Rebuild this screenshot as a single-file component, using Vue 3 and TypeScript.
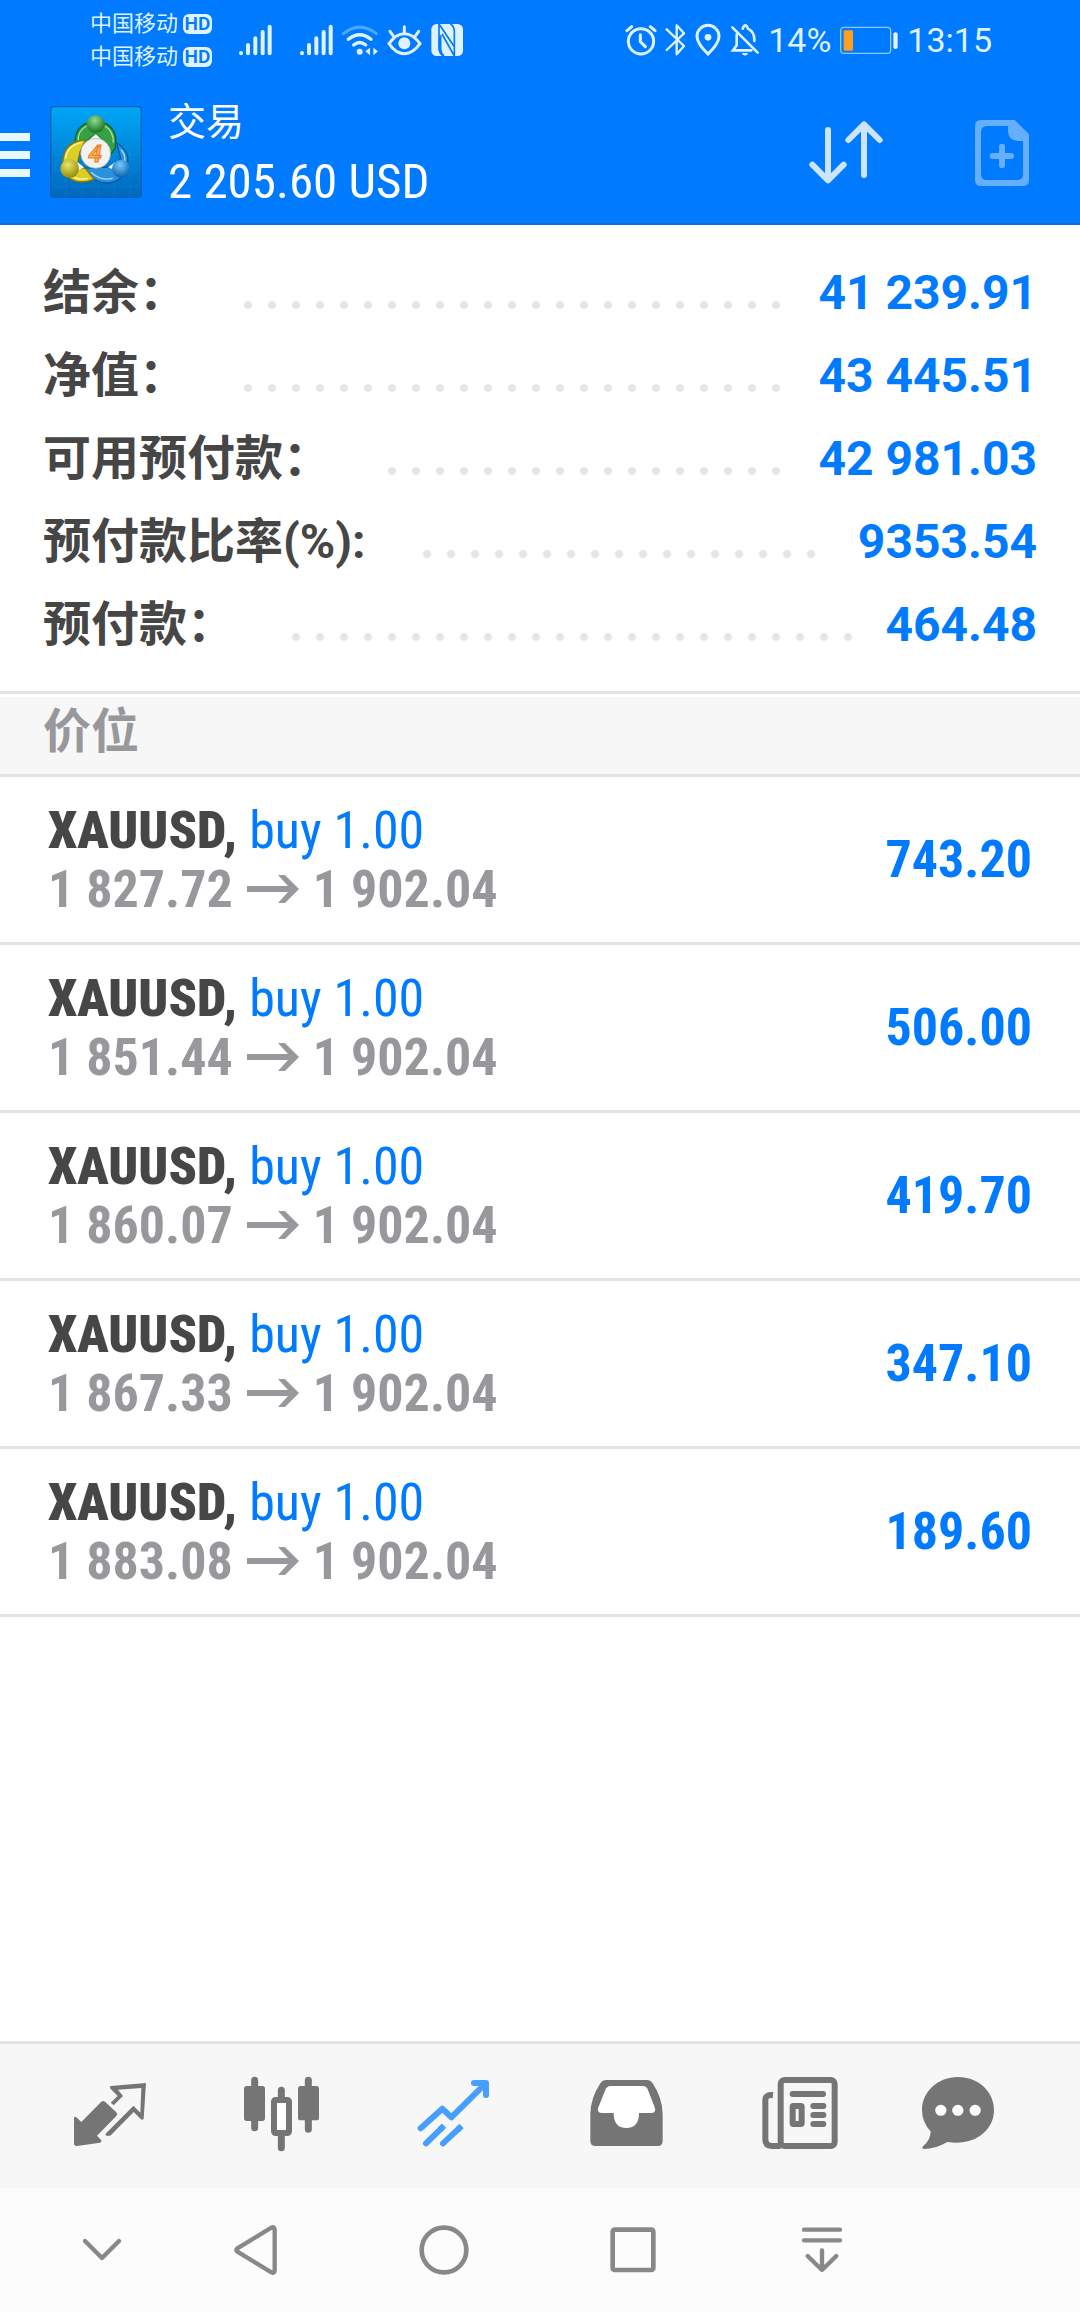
<script setup lang="ts">
interface SummaryRow {
  label: string
  value: string
}

interface Position {
  symbol: string
  side: string
  open: string
  current: string
  profit: string
}

const carriers: string[] = ['中国移动', '中国移动']

const summary: SummaryRow[] = [
  { label: '结余：', value: '41 239.91' },
  { label: '净值：', value: '43 445.51' },
  { label: '可用预付款：', value: '42 981.03' },
  { label: '预付款比率(%):', value: '9353.54' },
  { label: '预付款：', value: '464.48' },
]

const positions: Position[] = [
  { symbol: 'XAUUSD,', side: 'buy 1.00', open: '1 827.72', current: '1 902.04', profit: '743.20' },
  { symbol: 'XAUUSD,', side: 'buy 1.00', open: '1 851.44', current: '1 902.04', profit: '506.00' },
  { symbol: 'XAUUSD,', side: 'buy 1.00', open: '1 860.07', current: '1 902.04', profit: '419.70' },
  { symbol: 'XAUUSD,', side: 'buy 1.00', open: '1 867.33', current: '1 902.04', profit: '347.10' },
  { symbol: 'XAUUSD,', side: 'buy 1.00', open: '1 883.08', current: '1 902.04', profit: '189.60' },
]
</script>

<template>
  <div class="page">
    <div class="status">
      <div class="carriers">
        <div v-for="(name, i) in carriers" :key="i" class="carrier">
          <span>{{ name }}</span><span class="hd">HD</span>
        </div>
      </div>
      <svg v-for="n in 2" :key="n" class="signal" width="36" height="36" viewBox="474 66 108 108" fill="none" stroke="#dff2ff" stroke-width="12" stroke-linecap="round">
        <path d="M486 159v1M507 135v25M529 115v45M551 96v64M572 80v80" />
      </svg>
      <div class="status-group">
        <svg width="38" height="36" viewBox="786 66 114 108" fill="none" stroke="#dff2ff" stroke-linecap="round">
          <path d="M793 101Q842 62 892 101" stroke="#4da6ff" stroke-width="9" />
          <path d="M808 118Q842 90 876 118M824 135Q842 120 860 135" stroke-width="10" />
          <circle cx="842" cy="155" r="9" fill="#dff2ff" stroke="none" />
          <path d="M873 143v23l-14-12zM883 143v23l14-12z" fill="#dff2ff" stroke="none" />
        </svg>
        <svg width="36" height="36" viewBox="921 66 108 108" fill="none" stroke="#dff2ff" stroke-width="9" stroke-linecap="round">
          <path d="M930 131Q950 101 976 101T1023 131Q1002 161 976 161T930 131Z" />
          <path d="M976 80v18M933 94l10 14M1019 94l-10 14" />
          <circle cx="976" cy="130" r="18" fill="#dff2ff" stroke="none" />
        </svg>
        <svg width="36" height="36" viewBox="1053 66 108 108">
          <rect x="1060" y="72" width="95" height="96" rx="16" fill="#dff2ff" />
          <path d="M1083 72v74q1 16 15 22M1083 72l46 68V93q-1-15-12-21M1088 106v43q2 14 10 19M1092 102l37 66V93" fill="none" stroke="#007aff" stroke-width="5" />
        </svg>
      </div>
      <div class="status-right">
        <svg width="32" height="36" viewBox="66 66 96 108" fill="none" stroke="#dff2ff" stroke-width="9" stroke-linecap="round">
          <circle cx="114" cy="124" r="38" />
          <path d="M112 104v21l15 15M72 92l14-12M156 92l-14-12" />
        </svg>
        <svg width="21" height="36" viewBox="192 66 63 108" fill="none" stroke="#dff2ff" stroke-width="7" stroke-linejoin="round" stroke-linecap="round">
          <path d="M197 88l52 50-22 25V76l22 24-52 50" />
        </svg>
        <svg width="28" height="36" viewBox="282 66 84 108" fill="none" stroke="#dff2ff" stroke-width="9">
          <path d="M324 162Q291 131 291 109A33 33 0 0 1 357 109Q357 131 324 162Z" />
          <circle cx="324" cy="112" r="10" fill="#dff2ff" stroke="none" />
        </svg>
        <svg width="30" height="36" viewBox="396 66 90 108" fill="none" stroke="#dff2ff" stroke-width="8" stroke-linecap="round">
          <path d="M403 82l76 76M416 104v32l-11 15h55M434 86q4-10 8-10t8 10q19 10 19 32v5" />
          <path d="M433 161h16l-8 4z" stroke-width="4" />
        </svg>
        <span class="status-text">14%</span>
        <svg width="60" height="36" viewBox="717 66 180 108">
          <rect x="722" y="82" width="150" height="78" rx="10" fill="none" stroke="#8cc8ff" stroke-width="4" />
          <rect x="731" y="91" width="28" height="61" rx="3" fill="#ff9d1c" />
          <rect x="880" y="97" width="13" height="50" rx="6" fill="#dff2ff" />
        </svg>
        <span class="status-text">13:15</span>
      </div>
    </div>

    <header class="header">
      <button class="plain" type="button" aria-label="菜单">
        <svg width="30" height="50" viewBox="0 0 30 50" fill="#e9f7ff">
          <path d="M0 6h30v8H0zM0 24h30v8H0zM0 42h30v8H0z" />
        </svg>
      </button>
      <svg class="logo" width="92" height="92" viewBox="150 80 276 276">
        <defs>
          <linearGradient id="tile" x1="0" y1="0" x2="0" y2="1"><stop offset="0" stop-color="#00a6f8" /><stop offset="1" stop-color="#0068bd" /></linearGradient>
          <radialGradient id="green" cx=".45" cy=".3" r=".7"><stop offset="0" stop-color="#8fdc94" /><stop offset="1" stop-color="#15701f" /></radialGradient>
          <radialGradient id="gold" cx=".4" cy=".3" r=".7"><stop offset="0" stop-color="#e9e56c" /><stop offset="1" stop-color="#948d08" /></radialGradient>
          <radialGradient id="sky" cx=".45" cy=".3" r=".7"><stop offset="0" stop-color="#79c9f8" /><stop offset="1" stop-color="#0762ae" /></radialGradient>
        </defs>
        <rect x="152" y="82" width="272" height="272" rx="10" fill="url(#tile)" stroke="#0760b4" stroke-width="4" />
        <path d="M154 130h268M154 178h268M154 226h268M154 274h268M154 322h268M198 84v268M246 84v268M294 84v268M342 84v268M390 84v268" stroke="#36abf0" stroke-opacity=".2" stroke-width="2" />
        <path d="M229 206Q216 157 256 133H318Q356 155 345 208L322 238L306 181L286 164L262 184L246 215Z" fill="#35a044" stroke="#156329" stroke-width="4" />
        <path d="M235 188Q231 155 260 140M340 190Q341 157 315 140" fill="none" stroke="#a3e6a4" stroke-width="4" />
        <path d="M350 191Q393 218 381 260Q370 306 326 311Q275 311 254 266L302 264L340 264L362 238Z" fill="#2b91dc" stroke="#075aa3" stroke-width="4" />
        <path d="M273 279Q302 306 338 297M363 211Q380 231 372 250" fill="none" stroke="#a8dcff" stroke-width="4" />
        <path d="M257 182Q190 185 188 252L205 294Q234 318 282 300L256 267L230 263L240 218Z" fill="#dbcf27" stroke="#807708" stroke-width="4" />
        <path d="M197 237Q201 199 244 190M222 294Q242 303 263 297" fill="none" stroke="#faf8b2" stroke-width="4" />
        <path d="M267 181l20-17 19 17zM232 248l20 16-20 10zM324 264l22-16v25z" fill="#f3fbf3" />
        <circle cx="287" cy="134" r="27" fill="url(#green)" />
        <circle cx="209" cy="268" r="28" fill="url(#gold)" />
        <circle cx="363" cy="268" r="27" fill="url(#sky)" />
        <circle cx="287" cy="222" r="45" fill="#f3f2f3" stroke="#a5a5a5" stroke-width="2" />
        <text x="285" y="247" text-anchor="middle" font-family="Roboto, sans-serif" font-size="74" font-weight="700" font-style="italic" fill="#ffb15f" stroke="#e78122" stroke-width="3">4</text>
      </svg>
      <div class="account">
        <h1 class="title">交易</h1>
        <div class="balance">2 205.60 USD</div>
      </div>
      <button class="plain" type="button" aria-label="排序">
        <svg width="80" height="76" viewBox="78 72 240 228" fill="none" stroke="#cce4ff" stroke-width="18" stroke-linecap="round" stroke-linejoin="round">
          <path d="M144 120v150M97 224l47 47 47-47M252 255V105M205 150l47-47 47 47" />
        </svg>
      </button>
      <button class="plain" type="button" aria-label="新订单">
        <svg width="60" height="76" viewBox="576 72 180 228">
          <path fill="#66afff" fill-rule="evenodd" d="M603 90H704L747 133V270Q747 288 729 288H603Q585 288 585 270V108Q585 90 603 90ZM621 108Q603 108 603 126V252Q603 270 621 270H711Q729 270 729 252V153H714Q684 151 684 122V108Z" />
          <path d="M638 198h55M666 170v56" stroke="#66afff" stroke-width="18" stroke-linecap="round" />
        </svg>
      </button>
    </header>

    <main class="content">
      <dl class="summary">
        <div v-for="row in summary" :key="row.label" class="summary-row">
          <dt>{{ row.label }}</dt>
          <span class="leader" aria-hidden="true"></span>
          <dd>{{ row.value }}</dd>
        </div>
      </dl>

      <h2 class="section">价位</h2>
      <ul class="positions">
        <li v-for="(p, i) in positions" :key="i" class="position">
          <div>
            <div class="line"><b class="symbol">{{ p.symbol }}</b><span class="side">{{ p.side }}</span></div>
            <div class="line prices">
              <span>{{ p.open }}</span>
              <svg width="52" height="28" viewBox="0 0 52 28" fill="#98989c">
                <path d="M0 11H41L31 0H38L52 14L38 28H31L41 17H0Z" />
              </svg>
              <span>{{ p.current }}</span>
            </div>
          </div>
          <div class="profit">{{ p.profit }}</div>
        </li>
      </ul>
    </main>

    <nav class="tabs">
      <button class="plain" type="button" aria-label="行情">
        <svg width="80" height="80" viewBox="90 138 240 240" fill="#757575">
          <path d="M102 263Q104 258 109 262L124 276L183 216Q189 210 195 215L229 247Q234 253 229 258L171 317L184 331Q186 336 180 338L111 348Q102 349 102 339Z" />
          <path d="M212 168L318 159L311 266Q308 272 302 267L281 246L214 314Q209 319 199 317Q194 315 199 309L279 229Q281 227 284 231L301 248L304 174L234 179L249 198L221 226L212 218L233 198L210 175Q208 170 212 168Z" />
        </svg>
      </button>
      <button class="plain" type="button" aria-label="图表">
        <svg width="80" height="80" viewBox="606 138 240 240" fill="#757575">
          <rect x="612" y="168" width="63" height="105" rx="8" />
          <rect x="774" y="168" width="63" height="103" rx="8" />
          <path d="M644 151v142M805 151v147M724 181v25M724 312v41" stroke="#757575" stroke-width="21" stroke-linecap="round" />
          <rect x="702" y="210" width="45" height="99" rx="5" fill="#fff" stroke="#757575" stroke-width="18" />
        </svg>
      </button>
      <button class="plain" type="button" aria-label="交易">
        <svg width="80" height="80" viewBox="1122 138 240 240" fill="none" stroke="#469eff" stroke-width="18" stroke-linecap="round" stroke-linejoin="round">
          <path d="M1142 295L1207 236L1234 262L1334 163M1302 159H1338V195" />
          <path d="M1158 340L1204 295M1209 340L1257 295" />
          <path d="M1200 299L1212 287M1253 299L1265 288" stroke-linecap="butt" />
        </svg>
      </button>
      <button class="plain" type="button" aria-label="历史">
        <svg width="80" height="80" viewBox="138 138 240 240">
          <path fill="#757575" d="M198 150H322Q332 150 337 158Q368 205 368 252V333Q368 348 353 348H166Q151 348 151 333V252Q151 205 182 158Q187 150 198 150Z" />
          <path fill="#fff" d="M211 168H307Q319 168 323 178L344 232Q349 248 336 249H297Q297 294 259 294T221 249H184Q171 248 174 235L195 182Q200 168 211 168Z" />
        </svg>
      </button>
      <button class="plain" type="button" aria-label="新闻">
        <svg width="80" height="80" viewBox="654 138 240 240" fill="none" stroke="#757575" stroke-width="18">
          <path d="M699 195Q676 193 676 210V328Q676 348 696 348H722" />
          <rect x="722" y="150" width="162" height="198" rx="12" fill="#f7f7f7" />
          <path d="M758 192h91M820 228h30M820 255h30M820 282h30" stroke-linecap="round" />
          <rect x="758" y="228" width="27" height="54" rx="2" />
        </svg>
      </button>
      <button class="plain" type="button" aria-label="消息">
        <svg width="100" height="80" viewBox="1140 138 300 240">
          <path fill="#757575" d="M1254 141C1315 141 1362 185 1362 240C1362 303 1301 349 1222 336Q1187 357 1151 357Q1143 354 1150 348Q1172 330 1172 304Q1146 277 1146 240C1146 185 1194 141 1254 141Z" />
          <path d="M1202 241h1M1253 241h1M1305 241h1" stroke="#fff" stroke-width="33" stroke-linecap="round" />
        </svg>
      </button>
    </nav>

    <nav class="system">
      <button class="plain first" type="button" aria-label="收起">
        <svg width="44" height="60" viewBox="120 120 132 180" fill="none" stroke="#888" stroke-width="13" stroke-linecap="round" stroke-linejoin="round"><path d="M135 183l51 51 51-51" /></svg>
      </button>
      <button class="plain" type="button" aria-label="返回">
        <svg width="60" height="60" viewBox="555 120 180 180" fill="none" stroke="#888" stroke-width="13" stroke-linejoin="round"><path d="M592 205Q586 210 592 215L694 277Q704 281 704 271V149Q704 139 694 143Z" /></svg>
      </button>
      <button class="plain" type="button" aria-label="主页">
        <svg width="60" height="60" viewBox="1122 120 180 180" fill="none" stroke="#888" stroke-width="14"><circle cx="1212" cy="210" r="67" /></svg>
      </button>
      <button class="plain" type="button" aria-label="最近">
        <svg width="60" height="60" viewBox="186 120 180 180" fill="none" stroke="#888" stroke-width="14"><rect x="215" y="149" width="122" height="121" rx="6" /></svg>
      </button>
      <button class="plain" type="button" aria-label="通知">
        <svg width="60" height="60" viewBox="753 120 180 180" fill="none" stroke="#888" stroke-width="13" stroke-linecap="round" stroke-linejoin="round"><path d="M789 149h108M789 181h108M843 211v58M800 228l43 42 43-42" /></svg>
      </button>
    </nav>
  </div>
</template>

<style>
body {
  margin: 0;
}
</style>

<style scoped>
.page {
  display: flex;
  flex-direction: column;
  min-height: 100vh;
  background: #fff;
  color: #464646;
  font-family: Roboto, "Noto Sans CJK SC", sans-serif;
}

svg {
  display: block;
  flex: none;
}

.plain {
  display: flex;
  align-items: center;
  justify-content: center;
  padding: 0;
  border: 0;
  background: none;
}

.status {
  display: flex;
  align-items: center;
  height: 80px;
  padding: 0 88px 0 90px;
  background: #007aff;
  color: #dff2ff;
}

.carrier {
  display: flex;
  align-items: center;
  gap: 5px;
  font-size: 22px;
  font-weight: 400;
  line-height: 33px;
}

.hd {
  width: 29px;
  border-radius: 6px;
  background: #dff2ff;
  color: #007aff;
  font-size: 19px;
  font-weight: 600;
  line-height: 20px;
  text-align: center;
}

.signal {
  margin-left: 25px;
}

.status-group {
  display: flex;
  gap: 7px;
  margin-left: 7px;
}

.status-right {
  display: flex;
  align-items: center;
  gap: 8px;
  margin-left: auto;
}

.status-text {
  font-size: 34px;
  line-height: 40px;
}

.header {
  display: flex;
  align-items: center;
  height: 143px;
  padding-right: 48px;
  border-bottom: 2px solid #0a6fdc;
  background: #007aff;
  color: #fff;
}

.logo {
  margin-left: 20px;
}

.account {
  flex: 1;
  margin-left: 26px;
}

.title {
  margin: 0;
  font-size: 38px;
  font-weight: 400;
  line-height: 60px;
}

.balance {
  font-family: "Roboto Condensed", "Liberation Sans Narrow", Roboto, sans-serif;
  font-size: 49px;
  line-height: 60px;
}

.header .plain + .plain {
  margin-left: 86px;
}

.content {
  flex: 1;
}

.summary {
  margin: 0;
  padding: 26px 43px 25px;
  border-bottom: 3px solid #e4e4e4;
  font-size: 48px;
  line-height: 83px;
}

.summary-row {
  display: flex;
}

.summary dt {
  font-weight: 700;
}

.summary dd {
  margin: 0;
  color: #007aff;
  font-weight: 700;
}

.leader {
  flex: 1;
  margin: 0 28px 0 49px;
  background: radial-gradient(circle at 12px 54px, #e5e5e5 3px, transparent 5px) 0 0 / 24px 100% repeat-x;
}

.section {
  margin: 3px 0 0;
  padding: 0 43px 7px;
  border-bottom: 3px solid #e4e4e4;
  background: #f7f7f7;
  color: #98989c;
  font-size: 48px;
  font-weight: 700;
  line-height: 70px;
}

.positions {
  margin: 0;
  padding: 0;
  list-style: none;
  font-family: "Roboto Condensed", "Liberation Sans Narrow", Roboto, sans-serif;
  font-size: 52px;
  font-weight: 700;
}

.position {
  display: flex;
  align-items: center;
  justify-content: space-between;
  height: 165px;
  padding: 0 48px;
  border-bottom: 3px solid #e4e4e4;
}

.line {
  display: flex;
  align-items: center;
  gap: 12px;
  line-height: 59px;
}

.side {
  color: #007aff;
  font-weight: 400;
}

.prices {
  gap: 14px;
  color: #98989c;
}

.profit {
  color: #007aff;
}

.tabs {
  display: grid;
  grid-template-columns: repeat(6, 1fr);
  height: 144px;
  padding: 0 24px;
  border-top: 3px solid #e4e4e4;
  background: #f7f7f7;
}

.system {
  display: grid;
  grid-template-columns: 160fr repeat(4, 189fr) 164fr;
  height: 124px;
  background: #fcfcfc;
}

.first {
  justify-content: flex-end;
  padding-right: 36px;
}
</style>
